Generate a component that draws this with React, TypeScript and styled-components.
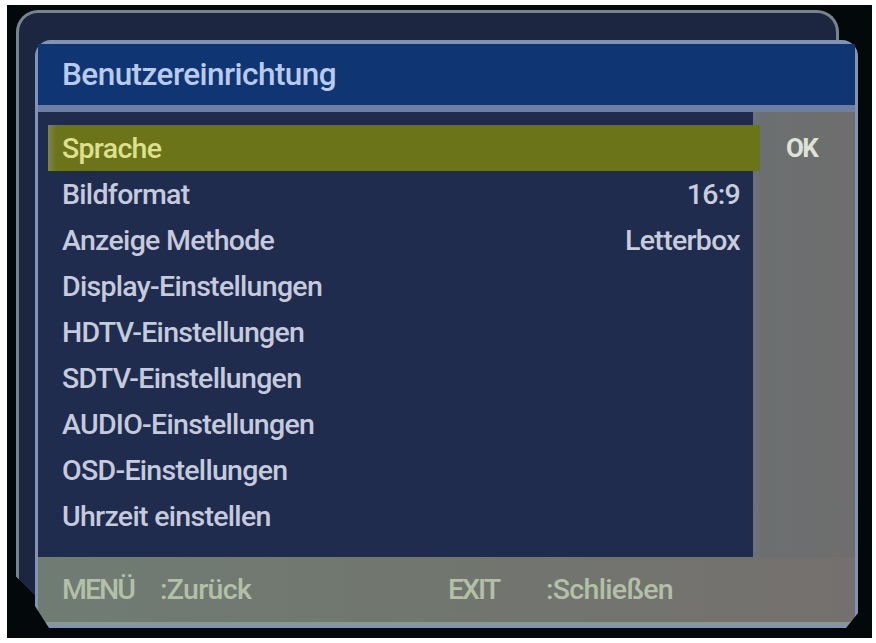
import * as React from 'react';
import styled, { createGlobalStyle } from 'styled-components';

const GlobalStyle = createGlobalStyle`
  html, body {
    margin: 0;
    padding: 0;
    background: #ffffff;
  }
  body {
    font-family: Roboto, "Liberation Sans", sans-serif;
  }
`;

const Screen = styled.div`
  margin: 5px 0 0 7px;
  width: 865px;
  height: 633px;
  padding: 5px 0 0 9px;
  box-sizing: border-box;
  background: #03080a;
  overflow: hidden;
`;

// the window behind; its cut bottom-left corner is a dark triangle laid over it
const BackPanel = styled.div`
  position: relative;
  width: 823px;
  height: 590px;
  box-sizing: border-box;
  padding: 27px 0 0 16px;
  background: #1d2640;
  border: 3px solid #76858d;
  border-bottom: none;
  border-radius: 22px 22px 0 0;

  &::after {
    content: '';
    position: absolute;
    left: -3px;
    bottom: 0;
    width: 24px;
    height: 24px;
    background: linear-gradient(45deg, #03080a 50%, transparent 50%);
  }
`;

const FrontPanel = styled.div`
  position: relative;
  z-index: 1;
  width: 823px;
  height: 588px;
  box-sizing: border-box;
  display: flex;
  flex-direction: column;
  border: 3px solid #8294b2;
  border-top-width: 4px;
  border-radius: 16px 16px 0 0;
  background: #1f2c4d;
  clip-path: polygon(0 0, 100% 0, 100% calc(100% - 15px), calc(100% - 12px) 100%, 14px 100%, 0 calc(100% - 22px));
`;

const Header = styled.div`
  height: 61px;
  flex-shrink: 0;
  display: flex;
  align-items: center;
  padding-left: 24px;
  background: #103573;
  border-bottom: 7px solid #6d80a3;
`;

const Title = styled.h1`
  margin: 0;
  font-family: Roboto, "Liberation Sans", sans-serif;
  font-weight: 500;
  font-size: 31.5px;
  letter-spacing: -0.55px;
  color: #b9caec;
`;

const Body = styled.div`
  flex: 1;
  display: flex;
`;

const List = styled.ul`
  flex: 1;
  margin: 0;
  padding: 13px 0 0 10px;
  list-style: none;
  background: #1f2c4e;
`;

const Row = styled.li<{ $selected?: boolean }>`
  height: 46px;
  display: flex;
  align-items: center;
  justify-content: space-between;
  padding: 0 13px 0 14px;
  margin-right: ${p => (p.$selected ? '-7px' : '0')};
  position: relative;
  font-weight: 500;
  font-size: 28.5px;
  letter-spacing: -0.7px;
  color: ${p => (p.$selected ? '#dde08e' : '#c6cadd')};
  background: ${p =>
    p.$selected ? 'linear-gradient(90deg, #7c8150 0, #6b7419 9px, #6b7419 100%)' : 'transparent'};
`;

const Value = styled.span`
  color: #c8ccdc;
`;

const Side = styled.div`
  width: 102px;
  padding: 13px 0 0 33px;
  box-sizing: border-box;
  background: linear-gradient(90deg, #6a727c 0, #6c6f70 8px, #6e6e6e 100%);
`;

const SideLabel = styled.div`
  height: 46px;
  display: flex;
  align-items: center;
  font-weight: 700;
  font-size: 26px;
  letter-spacing: -1.8px;
  color: #dfe2d6;
`;

const Footer = styled.div`
  height: 68px;
  flex-shrink: 0;
  display: flex;
  align-items: center;
  padding-left: 24px;
  box-sizing: border-box;
  background: linear-gradient(90deg, #6f7c74 0, #71776f 40%, #74706f 100%);
  border-bottom: 3px solid #889892;
`;

const Hint = styled.span<{ $width: number; $tight?: boolean }>`
  width: ${p => p.$width}px;
  font-weight: 500;
  font-size: 28.5px;
  letter-spacing: ${p => (p.$tight ? '-2px' : '-0.7px')};
  color: #b3c0a8;
`;

const items: { label: string; value?: string }[] = [
  { label: 'Sprache' },
  { label: 'Bildformat', value: '16:9' },
  { label: 'Anzeige Methode', value: 'Letterbox' },
  { label: 'Display-Einstellungen' },
  { label: 'HDTV-Einstellungen' },
  { label: 'SDTV-Einstellungen' },
  { label: 'AUDIO-Einstellungen' },
  { label: 'OSD-Einstellungen' },
  { label: 'Uhrzeit einstellen' },
];

const App = () => {
  return (
    <>
      <GlobalStyle />
      <Screen>
        <BackPanel>
          <FrontPanel>
            <Header>
              <Title>Benutzereinrichtung</Title>
            </Header>
            <Body>
              <List>
                {items.map((item, i) => (
                  <Row key={item.label} $selected={i === 0}>
                    <span>{item.label}</span>
                    {item.value && <Value>{item.value}</Value>}
                  </Row>
                ))}
              </List>
              <Side>
                <SideLabel>OK</SideLabel>
              </Side>
            </Body>
            <Footer>
              <Hint $width={98} $tight>MENÜ</Hint>
              <Hint $width={288}>:Zurück</Hint>
              <Hint $width={98} $tight>EXIT</Hint>
              <Hint $width={160}>:Schließen</Hint>
            </Footer>
          </FrontPanel>
        </BackPanel>
      </Screen>
    </>
  );
};

export default App;
